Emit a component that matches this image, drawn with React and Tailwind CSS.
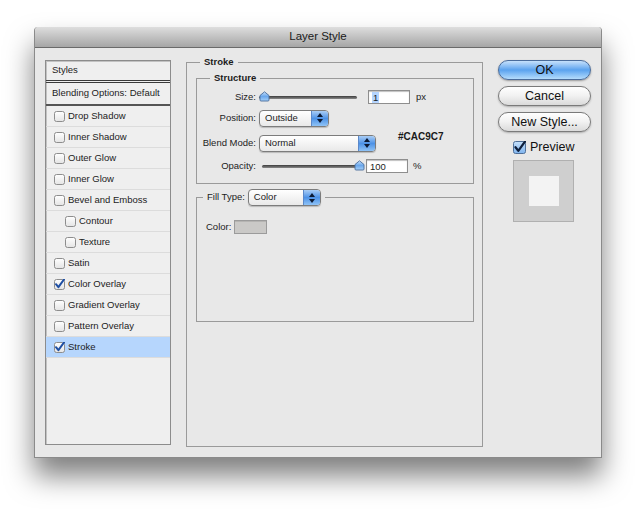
import React from 'react';

const font = "font-['Liberation_Sans',Arial,sans-serif]";

function Check({ checked }) {
  return (
    <svg width="11" height="11" viewBox="0 0 11 11" className="shrink-0">
      <defs>
        <linearGradient id="cbg" x1="0" y1="0" x2="0" y2="1">
          <stop offset="0" stopColor="#ffffff" />
          <stop offset="1" stopColor="#e4e4e4" />
        </linearGradient>
      </defs>
      <rect x="0.5" y="0.5" width="10" height="10" rx="2" fill="url(#cbg)" stroke="#8d8d8d" />
      {checked && (
        <path d="M2 5.2 L4.4 8.2 L10.2 0.2" fill="none" stroke="#1f4fa3" strokeWidth="2" strokeLinecap="round" strokeLinejoin="round" />
      )}
    </svg>
  );
}

function Row({ label, checked, indent, active }) {
  return (
    <div
      className={`h-[21px] flex items-center gap-[3px] border-b border-[#dcdcdc] ${indent ? 'pl-[19px]' : 'pl-[8px]'} ${active ? 'bg-[#b6d6fd]' : ''}`}
    >
      <Check checked={checked} />
      <span className="text-[9.5px] text-[#1c1c1c]">{label}</span>
    </div>
  );
}

function Select({ value, width, height = 17 }) {
  return (
    <div
      className="flex items-stretch rounded-[4px] border border-[#7c7c7c] bg-gradient-to-b from-white to-[#e9e9e9] shadow-[0_1px_1px_rgba(0,0,0,0.2)] overflow-hidden"
      style={{ width, height }}
    >
      <span className="flex-1 pl-[5px] flex items-center text-[9.5px] text-[#1c1c1c]">{value}</span>
      <span className="w-[17px] flex flex-col items-center justify-center gap-[2px] border-l border-[#5b88c9] bg-gradient-to-b from-[#a9cdf5] via-[#4d92e6] to-[#8fc3f6]">
        <svg width="6" height="4" viewBox="0 0 6 4"><path d="M3 0 L6 4 H0 Z" fill="#0c1a33" /></svg>
        <svg width="6" height="4" viewBox="0 0 6 4"><path d="M0 0 H6 L3 4 Z" fill="#0c1a33" /></svg>
      </span>
    </div>
  );
}

function Slider({ width, thumb }) {
  return (
    <div className="relative h-[12px]" style={{ width }}>
      <div className="absolute left-0 right-0 top-[5px] h-[3px] rounded-full bg-gradient-to-b from-[#3d3d3d] to-[#8a8a8a]" />
      <svg width="11" height="11" viewBox="0 0 11 11" className="absolute top-0" style={{ left: thumb }}>
        <defs>
          <linearGradient id="thg" x1="0" y1="0" x2="0" y2="1">
            <stop offset="0" stopColor="#c9e2fb" />
            <stop offset="0.5" stopColor="#6aa7ec" />
            <stop offset="1" stopColor="#a6d0f8" />
          </linearGradient>
        </defs>
        <path d="M1 4.5 L5.5 0.8 L10 4.5 V9 Q10 10 9 10 H2 Q1 10 1 9 Z" fill="url(#thg)" stroke="#4a6d9c" strokeWidth="0.9" />
      </svg>
    </div>
  );
}

function Field({ value, selected }) {
  return (
    <div className="w-[42px] h-[14px] border border-[#8e8e8e] bg-white shadow-[inset_0_1px_1px_rgba(0,0,0,0.25)] flex items-center pl-[3px]">
      <span className={`text-[9.5px] leading-[11px] text-[#1c1c1c] ${selected ? 'bg-[#b5d5ff] px-[1px]' : ''}`}>{value}</span>
    </div>
  );
}

function Label({ children }) {
  return <span className="w-[59px] text-right text-[9.5px] text-[#1c1c1c] shrink-0">{children}</span>;
}

function AquaButton({ children, primary }) {
  return (
    <div
      className={`h-[20px] rounded-full border flex items-center justify-center text-[12.5px] text-[#111] ${
        primary
          ? 'border-[#4a6c9b] bg-gradient-to-b from-[#c6e1fb] via-[#5aa2ee] to-[#b4dcfc] shadow-[0_1px_2px_rgba(0,0,0,0.35)]'
          : 'border-[#7a7a7a] bg-gradient-to-b from-white via-[#f1f1f1] to-[#dadada] shadow-[0_1px_2px_rgba(0,0,0,0.25)]'
      }`}
    >
      {children}
    </div>
  );
}

export default function App() {
  const rows = [
    { label: 'Drop Shadow' },
    { label: 'Inner Shadow' },
    { label: 'Outer Glow' },
    { label: 'Inner Glow' },
    { label: 'Bevel and Emboss' },
    { label: 'Contour', indent: true },
    { label: 'Texture', indent: true },
    { label: 'Satin' },
    { label: 'Color Overlay', checked: true },
    { label: 'Gradient Overlay' },
    { label: 'Pattern Overlay' },
    { label: 'Stroke', checked: true, active: true },
  ];

  return (
    <div className={`w-[640px] h-[514px] bg-white pt-[27px] pl-[34px] ${font}`}>
      <div className="w-[568px] h-[431px] flex flex-col rounded-t-[4px] bg-[#e8e8e8] border-x border-b border-[#8a8a8a] shadow-[0_18px_28px_rgba(0,0,0,0.5)]">
        {/* title bar */}
        <div className="h-[21px] shrink-0 rounded-t-[4px] bg-gradient-to-b from-[#dedede] to-[#a6a6a6] border-b border-[#6a6a6a] flex items-center justify-center">
          <span className="text-[11.5px] text-[#1a1a1a]">Layer Style</span>
        </div>

        <div className="flex-1 flex items-start pl-[10px]">
          {/* styles list */}
          <div className="mt-[12px] w-[126px] h-[385px] border border-[#8c8c8c] bg-[#efefef] shadow-[inset_1px_1px_0_#c2c2c2]">
            <div className="h-[22px] flex items-center pl-[6px] border-b-[3px] border-double border-[#3a3a3a]">
              <span className="text-[9.5px] text-[#1c1c1c]">Styles</span>
            </div>
            <div className="h-[23px] flex items-center pl-[6px] border-b-[2px] border-[#555]">
              <span className="text-[9.5px] text-[#1c1c1c]">Blending Options: Default</span>
            </div>
            {rows.map((r) => (
              <Row key={r.label} {...r} />
            ))}
          </div>

          {/* stroke settings */}
          <fieldset className="mt-[8px] ml-[15px] w-[297px] h-[391px] border border-[#9a9a9a]">
            <legend className="ml-[13px] px-[4px] text-[9.5px] leading-[12px] font-bold text-[#1c1c1c]">Stroke</legend>

            <fieldset className="mt-[4px] ml-[9px] w-[278px] h-[112px] border border-[#9a9a9a]">
              <legend className="ml-[13px] px-[4px] text-[9.5px] leading-[12px] font-bold text-[#1c1c1c]">Structure</legend>

              <div className="mt-[4px] h-[18px] flex items-center gap-[3px]">
                <Label>Size:</Label>
                <Slider width={98} thumb={0} />
                <div className="ml-[8px]"><Field value="1" selected /></div>
                <span className="ml-[3px] text-[9.5px] text-[#1c1c1c]">px</span>
              </div>

              <div className="mt-[3px] h-[18px] flex items-center gap-[3px]">
                <Label>Position:</Label>
                <Select value="Outside" width={70} height={17} />
              </div>

              <div className="mt-[7px] h-[18px] flex items-center gap-[3px]">
                <Label>Blend Mode:</Label>
                <Select value="Normal" width={117} height={17} />
                <span className="ml-[19px] -mt-[13px] text-[10px] font-bold text-[#1a1a1a]">#CAC9C7</span>
              </div>

              <div className="mt-[5px] h-[18px] flex items-center gap-[3px]">
                <Label>Opacity:</Label>
                <div className="ml-[3px]"><Slider width={99} thumb={92} /></div>
                <div className="ml-[2px]"><Field value="100" /></div>
                <span className="ml-[2px] text-[9.5px] text-[#1c1c1c]">%</span>
              </div>
            </fieldset>

            <fieldset className="mt-[5px] ml-[9px] w-[278px] h-[133px] border border-[#9a9a9a]">
              <legend className="ml-[6px] px-[4px] flex items-center gap-[3px]">
                <span className="text-[9.5px] text-[#1c1c1c]">Fill Type:</span>
                <Select value="Color" width={73} height={17} />
              </legend>
              <div className="mt-[14px] pl-[9px] flex items-center gap-[3px]">
                <span className="text-[9.5px] text-[#1c1c1c]">Color:</span>
                <div className="w-[33px] h-[14px] bg-[#cac9c7] border border-[#9b9b9b] shadow-[inset_0_1px_0_#b5b4b2]" />
              </div>
            </fieldset>
          </fieldset>

          {/* buttons */}
          <div className="mt-[12px] ml-[15px] w-[93px] flex flex-col">
            <AquaButton primary>OK</AquaButton>
            <div className="mt-[6px]"><AquaButton>Cancel</AquaButton></div>
            <div className="mt-[6px]"><AquaButton>New Style...</AquaButton></div>
            <div className="mt-[6px] ml-[15px] flex items-center gap-[4px]">
              <svg width="13" height="13" viewBox="0 0 13 13">
                <defs>
                  <linearGradient id="pvg" x1="0" y1="0" x2="0" y2="1">
                    <stop offset="0" stopColor="#c6e0fa" />
                    <stop offset="1" stopColor="#7fb4ee" />
                  </linearGradient>
                </defs>
                <rect x="0.5" y="0.5" width="12" height="12" rx="2" fill="url(#pvg)" stroke="#4f6f98" />
                <path d="M2.5 6.2 L5.3 9.8 L12 0.5" fill="none" stroke="#0e1f3c" strokeWidth="2.2" strokeLinecap="round" strokeLinejoin="round" />
              </svg>
              <span className="text-[12.5px] text-[#111]">Preview</span>
            </div>
            <div className="mt-[3px] ml-[15px] w-[61px] h-[62px] bg-[#cfcfcf] border border-[#b0b0b0] flex items-center justify-center">
              <div className="w-[30px] h-[30px] bg-[#f3f3f3]" />
            </div>
          </div>
        </div>
      </div>
    </div>
  );
}
